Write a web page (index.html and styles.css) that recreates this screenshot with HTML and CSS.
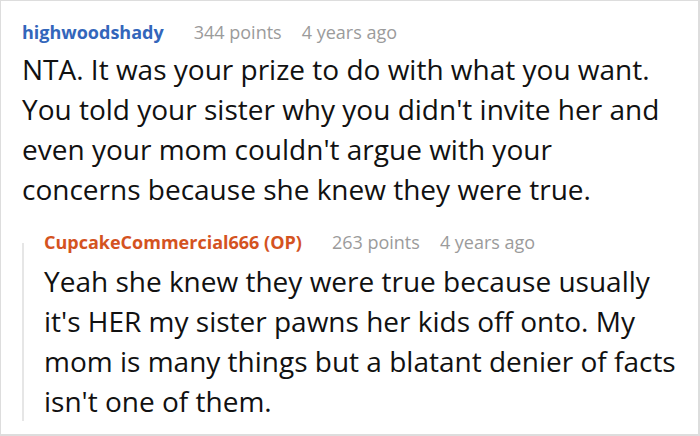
FILE: index.html
```html
<!DOCTYPE html>
<html>
<head>
<meta charset="utf-8">
<link rel="stylesheet" href="styles.css">
</head>
<body>
<div class="card">
  <div class="comment">
    <div class="meta">
      <span class="author">highwoodshady</span>
      <span class="info">344 points</span>
      <span class="info">4 years ago</span>
    </div>
    <p class="text">NTA. It was your prize to do with what you want. You told your sister why you didn't invite her and even your mom couldn't argue with your concerns because she knew they were true.</p>
  </div>
  <div class="reply">
    <div class="thread"></div>
    <div class="reply-body">
      <div class="meta meta-reply">
        <span class="author op">CupcakeCommercial666 (OP)</span>
        <span class="info">263 points</span>
        <span class="info">4 years ago</span>
      </div>
      <p class="text">Yeah she knew they were true because usually it's HER my sister pawns her kids off onto. My mom is many things but a blatant denier of facts isn't one of them.</p>
    </div>
  </div>
</div>
</body>
</html>
```
FILE: styles.css
```css
html, body {
  margin: 0;
  padding: 0;
  background: #ffffff;
}
.card {
  box-sizing: border-box;
  width: 700px;
  height: 436px;
  border: 1px solid #dddddd;
  border-width: 1px 2px 2px 1px;
  padding: 16px 0 0 21px;
  font-family: "Open Sans", "Noto Sans", sans-serif;
  overflow: hidden;
}
.meta {
  display: flex;
  gap: 20px;
  font-size: 18px;
  line-height: 30px;
  white-space: nowrap;
}
.author {
  font-weight: 700;
  color: #3366bb;
  margin-right: 10px;
}
.author.op {
  color: #d4531f;
}
.info {
  color: #9b9b9b;
}
.text {
  margin: 2px 0 0;
  font-size: 28px;
  line-height: 40px;
  color: #111111;
  width: 645px;
}
.reply {
  display: flex;
  margin-top: 18px;
}
.thread {
  width: 2px;
  flex: none;
  background: #e6e6e6;
  margin-top: 16px;
  margin-bottom: 0;
}
.reply-body {
  padding-left: 20px;
}
.reply-body .text {
  width: 640px;
  margin-top: 4px;
}
```
